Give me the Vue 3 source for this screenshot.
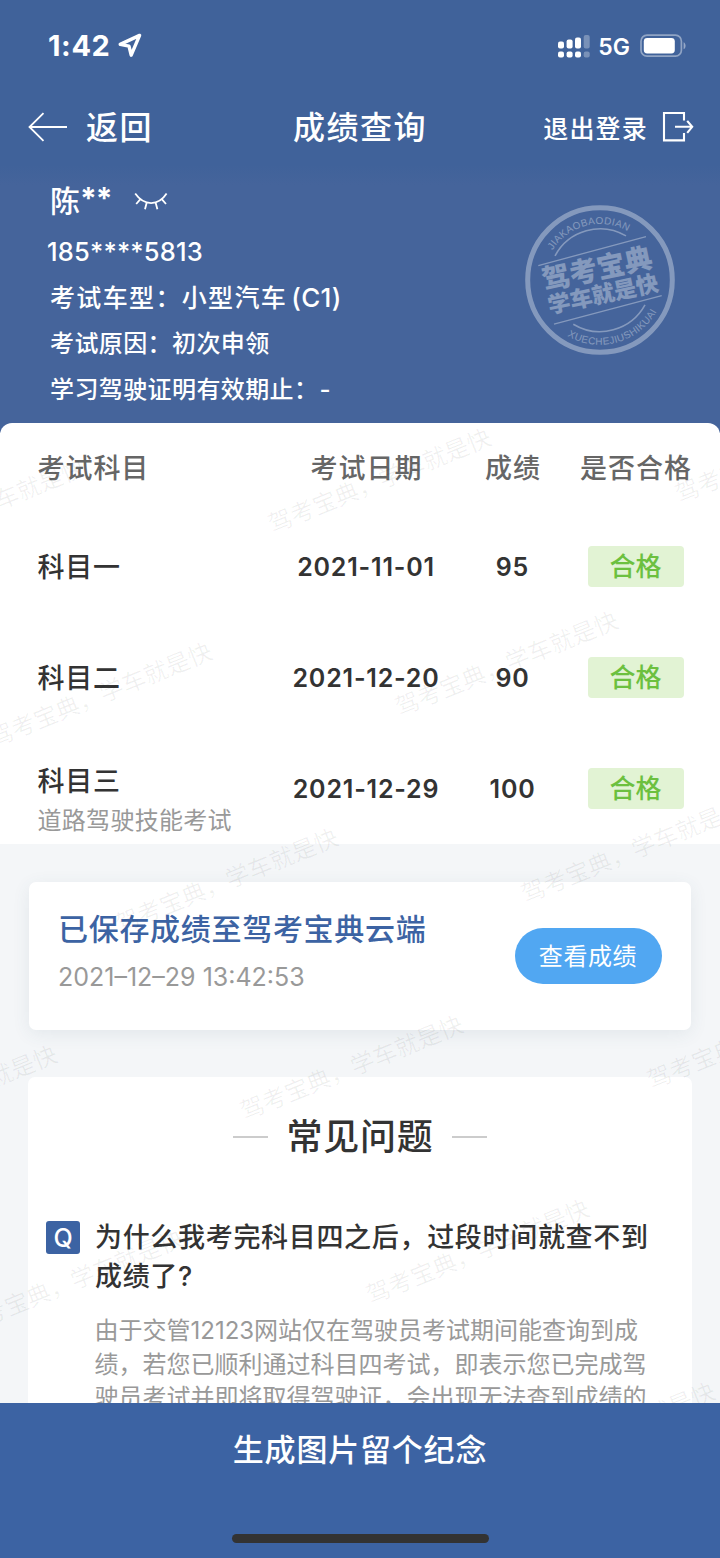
<template>
  <div class="page">
    <header class="top">
      <div class="statusBar">
        <div class="statusTime">
          <span>1:42</span>
          <svg class="locationIcon" width="26" height="26" viewBox="0 0 26 26">
            <path d="M22.6 2.4 3.2 11.4 12 13.2 14.2 22.2Z" />
          </svg>
        </div>
        <div class="statusRight">
          <svg width="33" height="24" viewBox="0 0 33 24" fill="#fff">
            <rect x="0" y="7.5" width="6" height="7" rx="2" />
            <rect x="8.6" y="5.5" width="6" height="9" rx="2" />
            <rect x="17" y="3.5" width="6" height="11" rx="2" />
            <rect x="25.7" y="1" width="6" height="13.5" rx="2" opacity=".3" />
            <rect x="0" y="17.4" width="6" height="6" rx="2" />
            <rect x="8.6" y="17.4" width="6" height="6" rx="2" />
            <rect x="17" y="17.4" width="6" height="6" rx="2" />
            <rect x="25.7" y="17.4" width="6" height="6" rx="2" opacity=".3" />
          </svg>
          <span class="network">5G</span>
          <svg width="47" height="24" viewBox="0 0 47 24">
            <rect x="1" y="1.2" width="40.4" height="21" rx="6" fill="none" stroke="#fff" stroke-opacity=".42" stroke-width="1.7" />
            <rect x="3.8" y="4" width="31" height="15.4" rx="3.4" fill="#fff" />
            <path d="M43.6 8.2c2.6 1 2.6 6 0 7z" fill="#fff" fill-opacity=".45" />
          </svg>
        </div>
      </div>

      <nav class="navBar">
        <div class="back">
          <svg width="40" height="30" viewBox="0 0 40 30">
            <path d="M15.5 1.2 1.5 15 15.5 28.8M1.5 15H39" />
          </svg>
          <span>返回</span>
        </div>
        <h1 class="navTitle">成绩查询</h1>
        <div class="logout">
          <span>退出登录</span>
          <svg width="32" height="32" viewBox="0 0 32 32">
            <path d="M22 9.6V2H2v27.4h20V22M13 15.8h17M25.2 9.8l5 6-5 6" />
          </svg>
        </div>
      </nav>

      <div class="profile">
        <div class="profileName">
          <span>陈<span class="stars">**</span></span>
          <svg width="34" height="20" viewBox="0 0 34 20">
            <path d="M1.2 1.6C10 14.2 24.5 14.2 32.6 1.6M6.2 7.4 2.2 12M12.6 11 11 17.2M21.7 11 23.4 17.2M28 7.4 32 12" />
          </svg>
        </div>
        <div class="profilePhone">185****5813</div>
        <div class="profileLine wide">考试车型：小型汽车<span class="licence">(C1)</span></div>
        <div class="profileLine">考试原因：初次申领</div>
        <div class="profileLine">学习驾驶证明有效期止：<span class="dash">-</span></div>

        <svg class="stamp" width="150" height="150" viewBox="0 0 150 150">
          <defs>
            <path id="arcTop" d="M19 75A56 56 0 0 1 131 75" />
            <path id="arcBottom" d="M10.3 75A64.7 64.7 0 0 0 139.7 75" />
          </defs>
          <circle cx="75" cy="75" r="72.3" stroke-width="5" />
          <path d="M30 50.9A51.2 51.2 0 0 1 101 30.9M48.3 119.2A51.5 51.5 0 0 0 120 99.9" stroke-width="1.6" />
          <path d="M13.3 60.6 121 31.6M29 119.2 136.7 90.6" stroke-width="1.3" />
          <g text-anchor="middle">
            <text class="stampLatin" transform="rotate(-14 75 75)">
              <textPath href="#arcTop" startOffset="50%">JIAKAOBAODIAN</textPath>
            </text>
            <text class="stampLatin" transform="rotate(-15.5 75 75)">
              <textPath href="#arcBottom" startOffset="50%">XUECHEJIUSHIKUAI</textPath>
            </text>
          </g>
          <g transform="rotate(-12 75 75)" text-anchor="middle">
            <text class="stampBig" x="74.5" y="73.5">驾考宝典</text>
            <text class="stampSmall" x="75" y="97.5">学车就是快</text>
          </g>
        </svg>
      </div>
    </header>

    <main class="content">
      <section class="sheet">
        <div class="row headRow">
          <div>考试科目</div>
          <div class="center">考试日期</div>
          <div class="center">成绩</div>
          <div class="center">是否合格</div>
        </div>
        <div v-for="item in results" :key="item.subject" class="row">
          <div class="subject" :class="{ hasNote: item.note }">
            <div class="subjectName">{{ item.subject }}</div>
            <div v-if="item.note" class="subjectNote">{{ item.note }}</div>
          </div>
          <div class="center number">{{ item.date }}</div>
          <div class="center number">{{ item.score }}</div>
          <div class="center"><span class="badge">合格</span></div>
        </div>
      </section>

      <section class="cloudCard">
        <div>
          <div class="cloudTitle">已保存成绩至驾考宝典云端</div>
          <div class="cloudTime">2021–12–29 13:42:53</div>
        </div>
        <button class="viewBtn">查看成绩</button>
      </section>

      <section class="faq">
        <h2 class="faqTitle">常见问题</h2>
        <div class="faqItem">
          <div class="faqIcon">Q</div>
          <div class="faqBody">
            <div class="question">
              <div v-for="line in question" :key="line">{{ line }}</div>
            </div>
            <div class="answer">
              <div v-for="line in answer" :key="line">{{ line }}</div>
            </div>
          </div>
        </div>
      </section>

      <!-- Repeated diagonal brand text -->
      <svg class="watermark" width="720" height="980" viewBox="0 423 720 980">
        <text
          v-for="(m, i) in marks"
          :key="i"
          :transform="`translate(${m[0]} ${m[1]}) rotate(-22)`"
          x="-11.5"
          y="8.5"
        >驾考宝典，学车就是快</text>
      </svg>
    </main>

    <footer class="bottomBar">
      <div class="bottomText">生成图片留个纪念</div>
      <div class="homeIndicator"></div>
    </footer>
  </div>
</template>

<script setup>
const results = [
  { subject: "科目一", date: "2021-11-01", score: 95 },
  { subject: "科目二", date: "2021-12-20", score: 90 },
  { subject: "科目三", note: "道路驾驶技能考试", date: "2021-12-29", score: 100 },
];

const question = ["为什么我考完科目四之后，过段时间就查不到", "成绩了?"];

const answer = [
  "由于交管12123网站仅在驾驶员考试期间能查询到成",
  "绩，若您已顺利通过科目四考试，即表示您已完成驾",
  "驶员考试并即将取得驾驶证，会出现无法查到成绩的",
];

const marks = [
  [-126, 551],
  [280, 521],
  [687, 491],
  [1, 735],
  [407, 704],
  [127, 921],
  [533, 891],
  [-154, 1138],
  [252, 1108],
  [659, 1077],
  [-28, 1322],
  [378, 1292],
  [504, 1475],
];
</script>

<style>
body {
  margin: 0;
}
</style>

<style scoped>
.page {
  width: 720px;
  height: 1558px;
  display: flex;
  flex-direction: column;
  overflow: hidden;
  background: #f4f6f8;
  font-family: Inter, "Noto Sans CJK SC", sans-serif;
  color: #333;
}

/* Header */
.top {
  height: 433px;
  flex-shrink: 0;
  background: linear-gradient(180deg, #40629a 0, #40629a 165px, #45649b 185px);
  color: #fff;
}

.statusBar {
  height: 91px;
  box-sizing: border-box;
  padding: 0 33px 0 48px;
  display: flex;
  align-items: center;
  justify-content: space-between;
}

.statusTime {
  display: flex;
  align-items: center;
  gap: 7px;
  font-size: 29px;
  font-weight: 700;
  line-height: 34px;
  letter-spacing: 0.6px;
}

.locationIcon path {
  fill: none;
  stroke: #fff;
  stroke-width: 3.4;
  stroke-linejoin: round;
}

.statusRight {
  display: flex;
  align-items: center;
}

.network {
  margin: 3px 10px 0 7px;
  font-size: 23px;
  font-weight: 600;
  line-height: 28px;
}

.navBar {
  height: 73px;
  padding: 0 26px 0 28px;
  display: grid;
  grid-template-columns: 1fr auto 1fr;
  align-items: center;
}

.back {
  display: flex;
  align-items: center;
  gap: 18px;
  font-size: 32px;
  font-weight: 500;
  line-height: 48px;
  letter-spacing: 1.4px;
}

.back svg {
  margin-bottom: 1px;
}

.back svg path {
  fill: none;
  stroke: #fff;
  stroke-width: 1.8;
}

.navTitle {
  margin: 0 2px 0 0;
  font-size: 32px;
  font-weight: 500;
  line-height: 48px;
  letter-spacing: 1.5px;
}

.logout {
  display: flex;
  align-items: center;
  justify-content: flex-end;
  gap: 14px;
  font-size: 25px;
  font-weight: 500;
  letter-spacing: 1.2px;
}

.logout span {
  padding-bottom: 1px;
}

.logout svg {
  margin-bottom: 1px;
}

.logout svg path {
  fill: none;
  stroke: #fff;
  stroke-width: 2.1;
}

.profile {
  position: relative;
  padding: 10px 0 0 50px;
}

.profileName {
  height: 54px;
  display: flex;
  align-items: center;
  gap: 22px;
  font-size: 30px;
  font-weight: 500;
  line-height: 54px;
}

.profileName > span {
  margin-top: -1px;
}

.profileName svg {
  margin-top: 2px;
}

.stars {
  position: relative;
  top: -3px;
  font-weight: 700;
  letter-spacing: -1px;
}

.profileName svg path {
  fill: none;
  stroke: #fff;
  stroke-width: 1.8;
}

.profilePhone {
  height: 47px;
  margin-left: -3px;
  font-size: 25.5px;
  font-weight: 500;
  line-height: 47px;
  letter-spacing: 0.2px;
}

.profileLine {
  height: 46px;
  font-size: 24px;
  font-weight: 500;
  line-height: 46px;
  letter-spacing: 0.4px;
}

.profileLine.wide {
  font-size: 25px;
  letter-spacing: 1.35px;
}

.licence {
  margin-left: 4px;
  font-size: 26px;
  line-height: 1;
  letter-spacing: 0.4px;
}

.dash {
  margin-left: 1px;
}

.stamp {
  position: absolute;
  top: 41px;
  left: 525px;
  opacity: 0.34;
}

.stamp circle,
.stamp path {
  fill: none;
  stroke: #fff;
}

.stamp text {
  fill: #fff;
}

.stampLatin {
  font-family: "Liberation Sans", sans-serif;
  font-size: 10px;
  letter-spacing: 0.4px;
}

.stampBig {
  font-size: 28px;
  font-weight: 900;
}

.stampSmall {
  font-size: 22.5px;
  font-weight: 900;
}

/* Scrolling area */
.content {
  position: relative;
  height: 980px;
  margin-top: -10px;
  flex-shrink: 0;
  overflow: hidden;
}

.sheet {
  height: 421px;
  background: #fff;
  border-radius: 12px 12px 0 0;
}

.row {
  height: 111px;
  padding: 0 28px 0 37.5px;
  display: grid;
  grid-template-columns: 248px 161px 132px 114px;
  align-items: center;
}

.headRow {
  height: 88px;
  box-sizing: border-box;
  padding-bottom: 2px;
  font-size: 27px;
  font-weight: 500;
  letter-spacing: 0.95px;
  color: #666;
}

.headRow .center {
  padding-left: 1px;
}

.center {
  text-align: center;
}

.subject {
  padding-top: 2px;
}

.subjectName {
  font-size: 27px;
  font-weight: 500;
  line-height: 40px;
  letter-spacing: 0.7px;
}

.subject.hasNote {
  padding-top: 24px;
}

.subjectNote {
  font-size: 24px;
  line-height: 38px;
  letter-spacing: 0.3px;
  color: #999;
}

.number {
  font-size: 25px;
  font-weight: 600;
  letter-spacing: 0.8px;
}

.badge {
  display: inline-block;
  width: 96px;
  height: 41px;
  border-radius: 4px;
  background: #e2f3d4;
  color: #6cc03f;
  font-size: 26px;
  font-weight: 500;
  line-height: 41px;
  vertical-align: middle;
}

.cloudCard {
  height: 148px;
  margin: 38px 29px 0;
  padding: 0 29px;
  box-sizing: border-box;
  display: flex;
  align-items: center;
  justify-content: space-between;
  background: #fff;
  border-radius: 7px;
  box-shadow: 0 4px 18px rgba(60, 90, 110, 0.09);
}

.cloudTitle {
  margin-top: -3px;
  font-size: 30px;
  font-weight: 500;
  line-height: 45px;
  letter-spacing: 0.7px;
  color: #3c63a3;
}

.cloudTime {
  font-size: 25px;
  font-weight: 400;
  line-height: 50px;
  color: #999;
}

.viewBtn {
  width: 147px;
  height: 56px;
  padding: 0 1px 3px 0;
  border: 0;
  border-radius: 28px;
  background: #51a7f2;
  color: #fff;
  font: 400 24px Inter, "Noto Sans CJK SC", sans-serif;
  letter-spacing: 0.6px;
}

.faq {
  height: 400px;
  margin: 47px 28px 0;
  background: #fff;
  border-radius: 7px;
}

.faqTitle {
  height: 120px;
  margin: 0;
  display: flex;
  align-items: center;
  justify-content: center;
  gap: 19px;
  font-size: 36px;
  font-weight: 500;
  line-height: 118px;
  letter-spacing: 0.7px;
}

.faqTitle::before,
.faqTitle::after {
  content: "";
  width: 35px;
  height: 2px;
  background: #ccc;
}

.faqItem {
  padding: 21px 0 0 18px;
  display: flex;
  gap: 15px;
}

.faqIcon {
  width: 34px;
  height: 33px;
  margin-top: 3px;
  border-radius: 3px;
  background: #3c63a3;
  color: #fff;
  font-size: 25px;
  font-weight: 500;
  line-height: 34px;
  text-align: center;
}

.faqBody {
  padding-top: 1px;
  white-space: nowrap;
}

.question {
  font-size: 27px;
  font-weight: 500;
  line-height: 38.5px;
  letter-spacing: 0.68px;
}

.answer {
  margin-top: 18px;
  margin-left: -0.5px;
  font-size: 24px;
  line-height: 33.5px;
  color: #999;
}

.watermark {
  position: absolute;
  inset: 0;
  pointer-events: none;
}

.watermark text {
  font-size: 23.8px;
  fill: rgba(0, 0, 0, 0.06);
}

/* Bottom action */
.bottomBar {
  flex: 1;
  display: flex;
  flex-direction: column;
  align-items: center;
  justify-content: space-between;
  padding: 22px 0 15px;
  background: #3c63a3;
}

.bottomText {
  font-size: 31px;
  font-weight: 500;
  line-height: 50px;
  letter-spacing: 0.8px;
  color: #fff;
}

.homeIndicator {
  width: 257px;
  height: 9px;
  border-radius: 5px;
  background: #333;
}
</style>
